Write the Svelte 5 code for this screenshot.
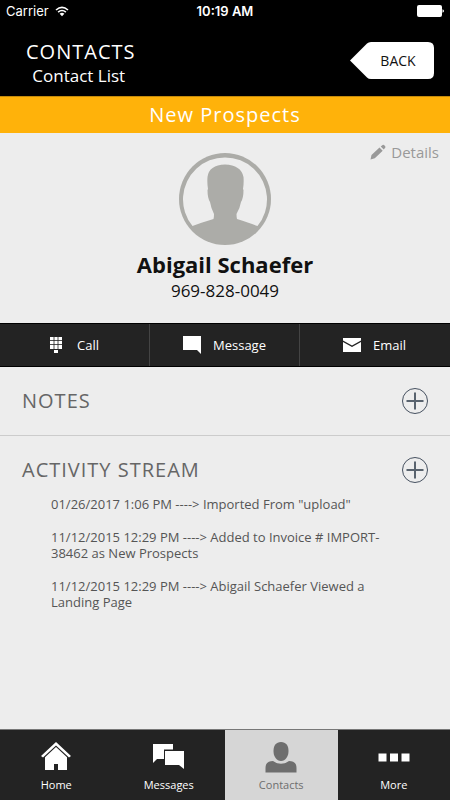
<script lang="ts">
	interface Activity {
		time: string;
		text: string;
	}

	let activeTab = $state('Contacts');

	const tabs = ['Home', 'Messages', 'Contacts', 'More'];
	const activities: Activity[] = [
		{ time: '01/26/2017 1:06 PM', text: 'Imported From "upload"' },
		{ time: '11/12/2015 12:29 PM', text: 'Added to Invoice # IMPORT-38462 as New Prospects' },
		{ time: '11/12/2015 12:29 PM', text: 'Abigail Schaefer Viewed a Landing Page' }
	];
</script>

{#snippet plusIcon()}
	<svg width="28" height="28" viewBox="0 0 28 28" aria-hidden="true">
		<circle cx="14" cy="14" r="12.5" fill="none" stroke="#465160" />
		<path d="M5.500 14h17M14 5.500v17" stroke="#59636e" stroke-width="2" />
	</svg>
{/snippet}

<div class="app">
	<div class="status-bar">
		<span class="carrier">
			Carrier
			<svg width="14" height="11" viewBox="0 0 14 11" aria-hidden="true">
				<path d="M1 4Q7-1.300 13 4M3.100 6.200Q7 2.800 10.900 6.200" fill="none" stroke="#fff" stroke-width="1.600" />
				<path d="M4.600 7.700Q7 5.700 9.400 7.700L7 10.200Z" fill="#fff" />
			</svg>
		</span>
		<span class="time">10:19 AM</span>
		<svg class="battery" width="27" height="12" viewBox="0 0 27 12" aria-hidden="true">
			<rect width="25" height="12" rx="2" fill="#fff" />
			<path d="M25.500 4.200Q27 4.800 27 6T25.500 7.800Z" fill="#fff" />
		</svg>
	</div>

	<header>
		<div class="titles">
			<h1>CONTACTS</h1>
			<p>Contact List</p>
		</div>
		<button class="back" type="button">
			<svg viewBox="0 0 84 37" width="84" height="37" aria-hidden="true">
				<path d="M0 18.500L17 1.500Q18.500 0 21 0H78Q84 0 84 6V31Q84 37 78 37H21Q18.500 37 17 35.500Z" fill="#fff" />
			</svg>
			<span>BACK</span>
		</button>
	</header>

	<div class="banner">New Prospects</div>

	<main>
		<section class="profile">
			<a class="details" href="#details">
				<svg width="16" height="16" viewBox="0 0 16 16" aria-hidden="true">
					<path d="M0.500 15.500L1.500 11L9.500 3.500L12.700 6.700L4.800 14.300Z M10.700 2.500L12.600.900Q13.300.400 14 1.100L15.200 2.300Q15.800 3 15.200 3.700L13.700 5.500Z" fill="#999" />
				</svg>
				Details
			</a>
			<svg class="avatar" width="92" height="92" viewBox="0 0 92 92" aria-hidden="true">
				<circle cx="46" cy="46" r="46" fill="#acaca8" />
				<path d="M13.500 73A42 42 0 1 1 78.500 73Q71 70 58 66Q57.500 64 57.500 61Q61 55 62 49Q64.500 45 64.500 37L64 36Q65 30 64.500 24Q62 12 46 11.500Q30 12 28.500 24Q28 30 29 36L28.500 37Q28.500 45 31 49Q32 55 35 61Q35 64 34.500 66Q21 70 13.500 73Z" fill="#ededed" />
			</svg>
			<h2>Abigail Schaefer</h2>
			<p class="phone">969-828-0049</p>
		</section>

		<div class="actions">
			<button type="button">
				<svg width="12" height="16" viewBox="0 0 12 16" aria-hidden="true">
					<path d="M0 0h12v12H8v4H4v-4H0z" fill="#fff" />
					<path d="M0 3.500h12M0 7.500h12M4 0v12M8 0v12" stroke="#232323" stroke-width="0.800" />
					<path d="M3 12.500h6" stroke="#232323" />
				</svg>
				Call
			</button>
			<button type="button">
				<svg width="18" height="18" viewBox="0 0 18 18" aria-hidden="true">
					<path d="M0 0H18V18L14 14H0Z" fill="#fff" />
				</svg>
				Message
			</button>
			<button type="button">
				<svg width="18" height="14" viewBox="0 0 18 14" aria-hidden="true">
					<path d="M0 0H18V2.500L9 7.500L0 2.500ZM0 4L9 9L18 4V14H0Z" fill="#fff" />
				</svg>
				Email
			</button>
		</div>

		<section class="notes">
			<div class="section-head">
				<h3>NOTES</h3>
				<button type="button" aria-label="Add note">{@render plusIcon()}</button>
			</div>
		</section>

		<section class="activity">
			<div class="section-head">
				<h3>ACTIVITY STREAM</h3>
				<button type="button" aria-label="Add activity">{@render plusIcon()}</button>
			</div>
			<ul>
				{#each activities as item}
					<li>{item.time} ----&gt; {item.text}</li>
				{/each}
			</ul>
		</section>
	</main>

	<nav>
		{#each tabs as tab}
			<button type="button" class:active={tab === activeTab} onclick={() => (activeTab = tab)}>
				<svg width="32" height="32" viewBox="0 0 32 32" aria-hidden="true">
					{#if tab === 'Home'}
						<path d="M16 1L31 15L29 16.500L16 4.500L3 16.500L1 15Z" fill="currentColor" />
						<path d="M16 6L27 16.200V29H18V23H14V29H5V16.200Z" fill="currentColor" />
					{:else if tab === 'Messages'}
						<path d="M0 3H20V8.500H11V18H4L0 22Z" fill="currentColor" />
						<path d="M12 10H31V28L26 24H12Z" fill="currentColor" />
					{:else if tab === 'Contacts'}
						<path d="M16 1C21 1 23.500 4.500 23.500 10C23.500 15.500 20.500 20 16 20S8.500 15.500 8.500 10C8.500 4.500 11 1 16 1Z" fill="currentColor" />
						<path d="M.500 31.500V27Q.500 20 8 20Q11 22.700 16 22.700T24 20Q31.500 20 31.500 27V31.500Z" fill="currentColor" />
					{:else}
						<path d="M0.500 12.500h8v8h-8zM12 12.500h8v8h-8zM23.500 12.500h8v8h-8z" fill="currentColor" />
					{/if}
				</svg>
				{tab}
			</button>
		{/each}
	</nav>
</div>

<style>
	:global(body) {
		margin: 0;
		background: #ededed;
	}
	.app {
		display: flex;
		flex-direction: column;
		min-height: 100vh;
		font-family: 'Open Sans', sans-serif;
		background: #ededed;
		color: #111;
	}
	h1,
	h2,
	h3,
	p,
	ul {
		margin: 0;
		padding: 0;
		font-weight: 400;
	}
	button {
		padding: 0;
		border: 0;
		background: none;
		color: inherit;
		font: inherit;
		cursor: pointer;
	}
	svg {
		display: block;
		flex: none;
	}
	.status-bar {
		display: grid;
		grid-template-columns: 1fr auto 1fr;
		align-items: center;
		height: 22px;
		padding: 0 6px;
		background: #000;
		color: #fff;
		font-family: Inter, sans-serif;
		font-size: 13px;
	}
	.carrier {
		display: flex;
		align-items: center;
		gap: 6px;
	}
	.time {
		font-weight: 600;
	}
	.battery {
		justify-self: end;
	}
	header {
		display: flex;
		justify-content: space-between;
		align-items: center;
		height: 74px;
		padding: 2px 16px 0 26px;
		box-sizing: border-box;
		background: #000;
		color: #fff;
	}
	.titles {
		padding-top: 8px;
		text-align: center;
	}
	h1 {
		font-size: 20px;
		line-height: 24px;
		letter-spacing: 1px;
	}
	.titles p {
		padding-right: 4px;
		font-size: 17px;
		line-height: 24px;
	}
	.back {
		display: grid;
		align-items: center;
		color: #111;
		font-size: 14px;
	}
	.back svg,
	.back span {
		grid-area: 1 / 1;
	}
	.back span {
		padding-left: 12px;
	}
	.banner {
		padding: 4px 0;
		border-top: 1px solid #c48a0c;
		background: #ffb20a;
		color: #fff;
		font-size: 20px;
		line-height: 28px;
		letter-spacing: 1px;
		text-align: center;
	}
	main {
		flex: 1;
	}
	.profile {
		position: relative;
		display: flex;
		flex-direction: column;
		align-items: center;
		padding: 20px 0;
	}
	.details {
		position: absolute;
		top: 7px;
		right: 11px;
		display: flex;
		align-items: center;
		gap: 5px;
		color: #999;
		font-size: 15px;
		line-height: 24px;
		text-decoration: none;
	}
	h2 {
		margin-top: 4px;
		font-size: 22px;
		line-height: 30px;
		font-weight: 700;
	}
	.phone {
		font-size: 17px;
		line-height: 24px;
		font-weight: 500;
	}
	.actions {
		display: grid;
		grid-template-columns: repeat(3, 1fr);
		border-top: 1px solid #000;
		border-bottom: 1px solid #000;
		background: #232323;
		color: #fff;
	}
	.actions button {
		display: flex;
		justify-content: center;
		align-items: center;
		gap: 12px;
		height: 42px;
		border-right: 1px solid #444;
		font-size: 13px;
	}
	.actions button:first-child {
		gap: 15px;
	}
	.actions button:last-child {
		border-right-color: #232323;
	}
	.notes {
		padding: 20px 21px 20px 22px;
		border-bottom: 1px solid #ccc;
	}
	.activity {
		padding: 20px 21px 20px 22px;
	}
	.section-head {
		display: flex;
		justify-content: space-between;
		align-items: center;
	}
	h3 {
		color: #666;
		font-size: 20px;
		line-height: 28px;
		letter-spacing: 1px;
	}
	ul {
		display: flex;
		flex-direction: column;
		gap: 17px;
		padding: 12px 40px 0 29px;
		list-style: none;
	}
	li {
		color: #555;
		font-size: 13px;
		line-height: 16px;
	}
	nav {
		display: grid;
		grid-template-columns: repeat(4, 1fr);
		border-top: 1px solid #777;
		background: #232323;
		color: #fff;
	}
	nav button {
		display: flex;
		flex-direction: column;
		align-items: center;
		gap: 4px;
		padding: 11px 0 8px;
		font-size: 11px;
		line-height: 15px;
	}
	nav button.active {
		background: #d6d6d6;
		color: #6e6e6e;
	}
</style>
